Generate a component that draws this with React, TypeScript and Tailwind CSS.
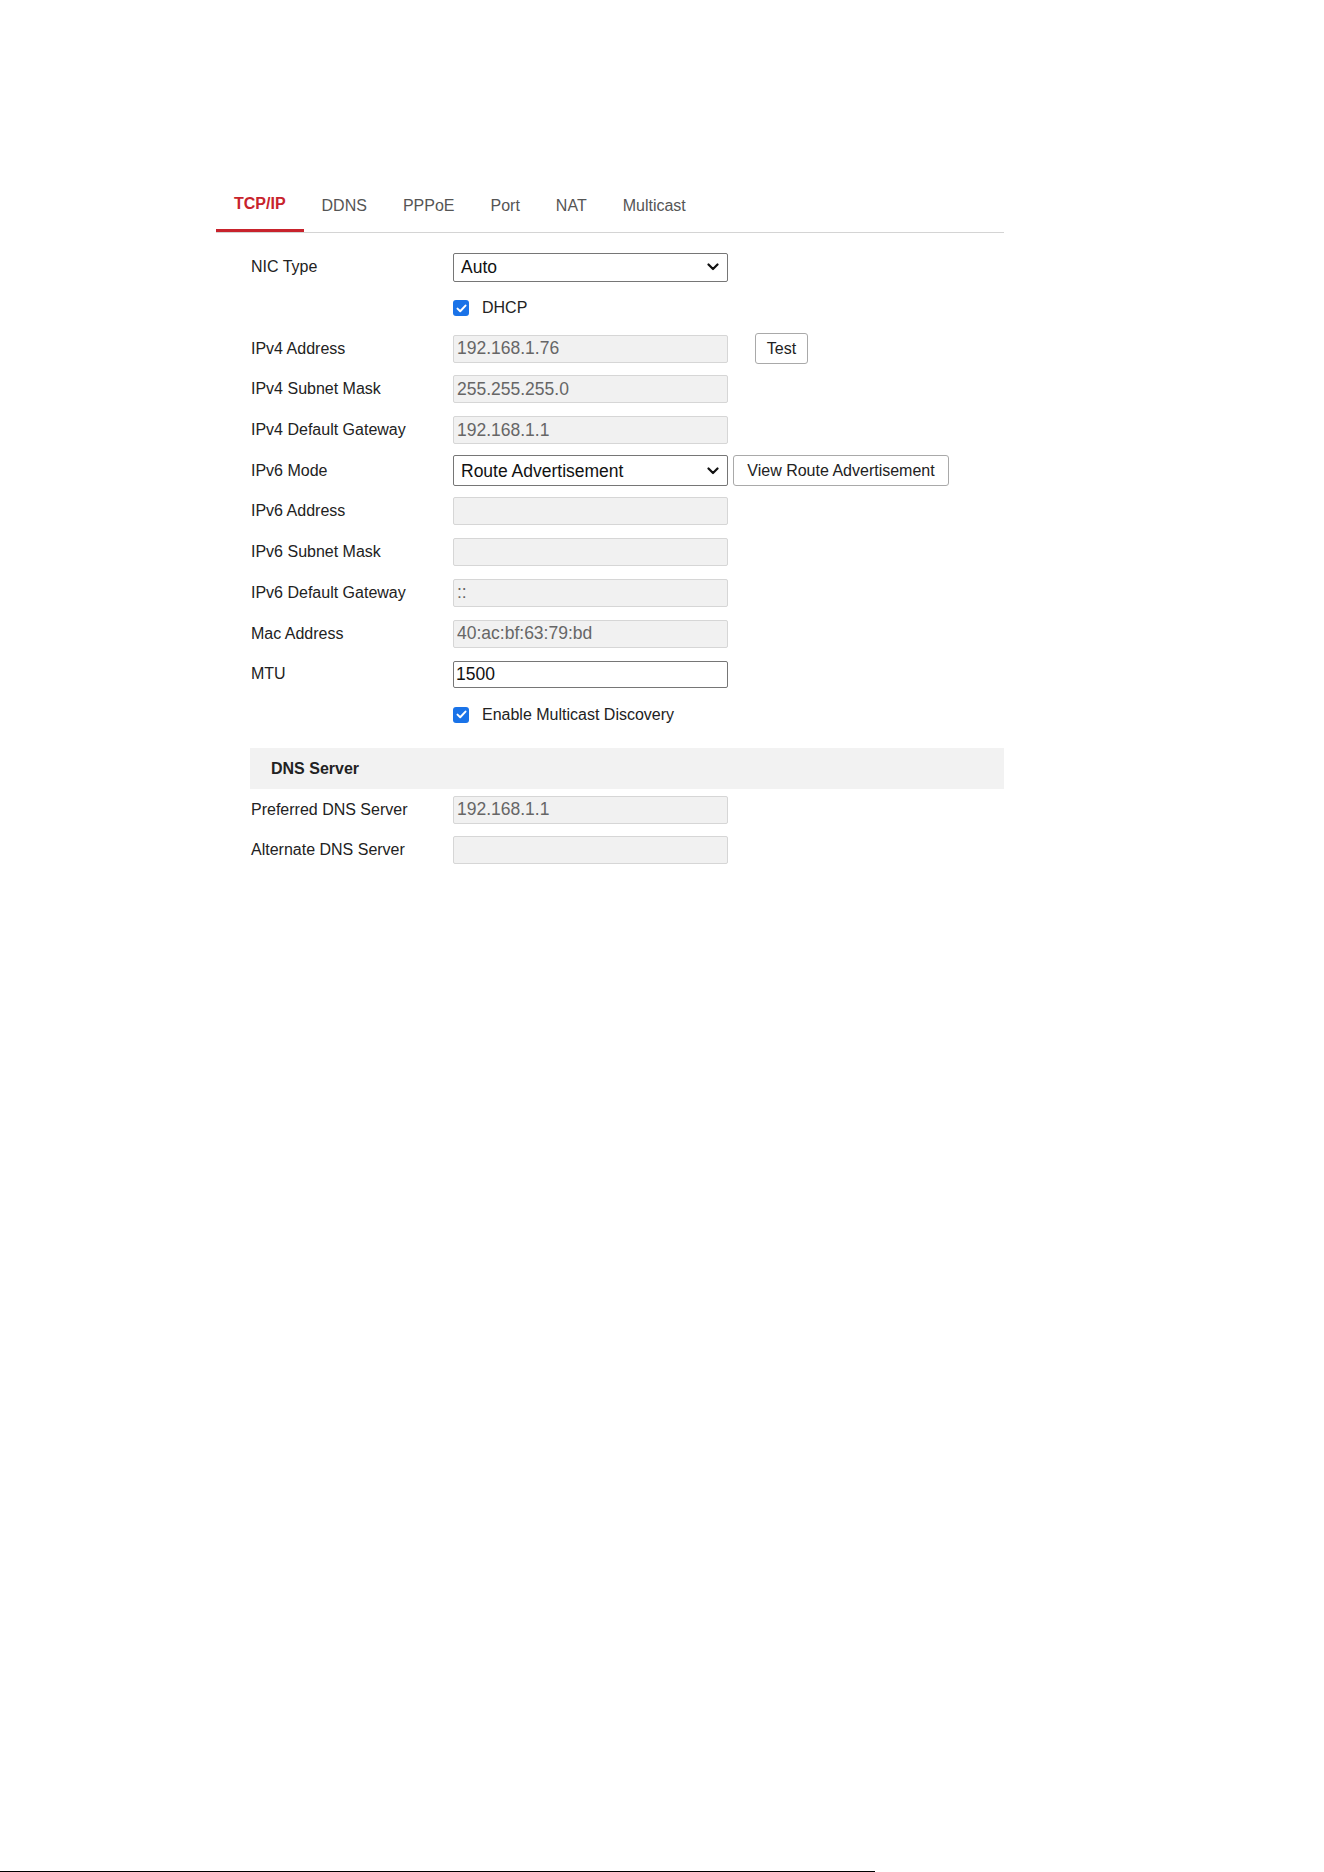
import React from 'react';

const tabs = ['TCP/IP', 'DDNS', 'PPPoE', 'Port', 'NAT', 'Multicast'];

const Chevron = () => (
  <svg width="12" height="8" viewBox="0 0 12 8" fill="none">
    <path d="M1.5 1.5 L6 6 L10.5 1.5" stroke="#111" strokeWidth="2.2" strokeLinecap="round" strokeLinejoin="round" />
  </svg>
);

const Check = () => (
  <div className="flex h-[16px] w-[16px] items-center justify-center rounded-[3px] bg-[#1a73e8]">
    <svg width="11" height="9" viewBox="0 0 11 9" fill="none">
      <path d="M1.5 4.6 L4.2 7.2 L9.5 1.6" stroke="#fff" strokeWidth="2" strokeLinecap="round" strokeLinejoin="round" />
    </svg>
  </div>
);

const Row = ({ label, children }: { label?: string; children?: React.ReactNode }) => (
  <div className="flex h-[40.7px] items-center">
    <div className="w-[202px] text-[16px] text-[#222]">{label}</div>
    <div className="flex items-center">{children}</div>
  </div>
);

const ReadOnly = ({ value = '' }: { value?: string }) => (
  <input
    readOnly
    value={value}
    className="h-[28px] w-[275px] rounded-[2px] border border-[#d6d6d6] bg-[#f1f1f1] pl-[3px] text-[17.5px] text-[#666] outline-none"
  />
);

const Select = ({ value, h = 'h-[29px]' }: { value: string; h?: string }) => (
  <div className={`flex w-[275px] items-center justify-between rounded-[2px] border border-[#767676] bg-white pl-[7px] pr-[8px] text-[17.5px] text-[#111] ${h}`}>
    <span>{value}</span>
    <Chevron />
  </div>
);

const CheckRow = ({ text }: { text: string }) => (
  <Row>
    <div className="flex items-center gap-[13px]">
      <Check />
      <span className="text-[16px] text-[#222]">{text}</span>
    </div>
  </Row>
);

export default function App() {
  return (
    <div className="flex min-h-[1872px] flex-col bg-white font-['Liberation_Sans',Arial,sans-serif]">
      <div className="ml-[216px] mt-[183px] w-[788px]">
        {/* tabs */}
        <div className="flex border-b border-[#d4d4d4]">
          {tabs.map((t, i) => (
            <div
              key={t}
              className={
                i === 0
                  ? 'h-[49px] border-b-[3px] border-[#c8232c] px-[18px] pt-[11px] text-[16px] leading-[20px] font-bold text-[#c8232c]'
                  : 'h-[49px] border-b-[3px] border-transparent px-[18px] pt-[13px] text-[16px] leading-[20px] text-[#555]'
              }
            >
              {t}
            </div>
          ))}
        </div>

        <div className="ml-[35px] mt-[14px]">
          <Row label="NIC Type">
            <Select value="Auto" />
          </Row>
          <CheckRow text="DHCP" />
          <Row label="IPv4 Address">
            <ReadOnly value="192.168.1.76" />
            <button className="ml-[27px] h-[31px] w-[53px] rounded-[3px] border border-[#a9a9a9] bg-white text-[16px] text-[#222]">
              Test
            </button>
          </Row>
          <Row label="IPv4 Subnet Mask">
            <ReadOnly value="255.255.255.0" />
          </Row>
          <Row label="IPv4 Default Gateway">
            <ReadOnly value="192.168.1.1" />
          </Row>
          <Row label="IPv6 Mode">
            <Select value="Route Advertisement" h="h-[31px]" />
            <button className="ml-[5px] h-[31px] w-[216px] rounded-[3px] border border-[#a9a9a9] bg-white text-[16px] text-[#222]">
              View Route Advertisement
            </button>
          </Row>
          <Row label="IPv6 Address">
            <ReadOnly />
          </Row>
          <Row label="IPv6 Subnet Mask">
            <ReadOnly />
          </Row>
          <Row label="IPv6 Default Gateway">
            <ReadOnly value="::" />
          </Row>
          <Row label="Mac Address">
            <ReadOnly value="40:ac:bf:63:79:bd" />
          </Row>
          <Row label="MTU">
            <input
              readOnly
              value="1500"
              className="h-[27px] w-[275px] rounded-[2px] border border-[#767676] bg-white pl-[2px] text-[17.5px] text-[#111] outline-none"
            />
          </Row>
          <CheckRow text="Enable Multicast Discovery" />

          {/* DNS */}
          <div className="-ml-px mt-[13px] flex h-[41px] items-center bg-[#f2f2f2] pl-[21px] text-[16px] font-bold text-[#222]">
            DNS Server
          </div>
          <Row label="Preferred DNS Server">
            <ReadOnly value="192.168.1.1" />
          </Row>
          <Row label="Alternate DNS Server">
            <ReadOnly />
          </Row>
        </div>
      </div>
      <div className="mt-auto h-px w-[875px] bg-black" />
    </div>
  );
}
